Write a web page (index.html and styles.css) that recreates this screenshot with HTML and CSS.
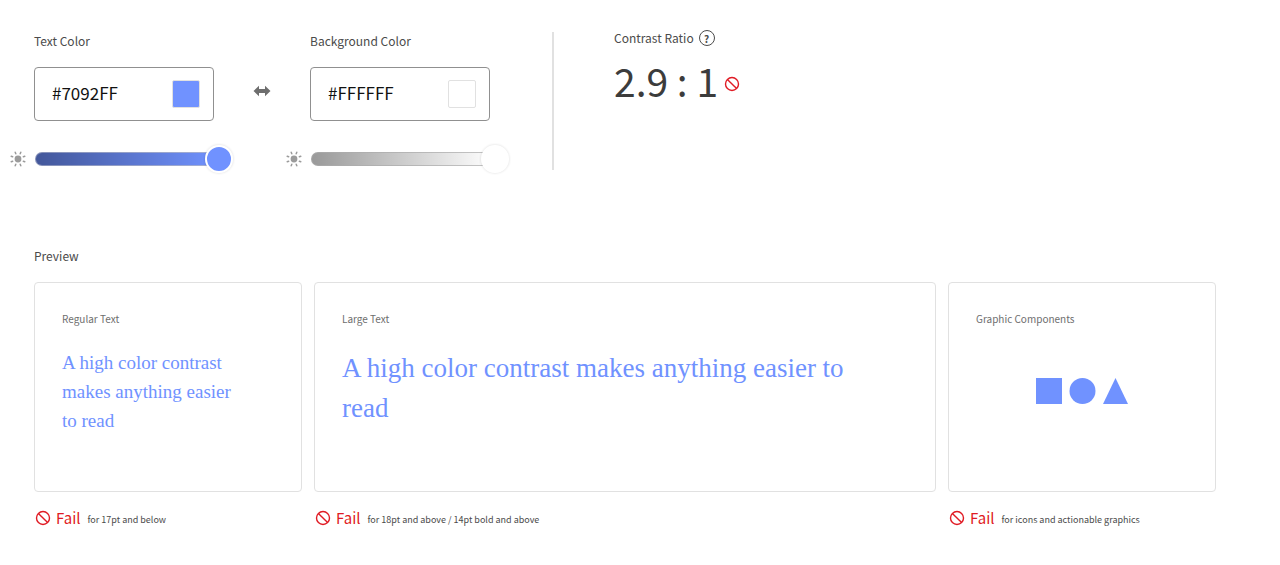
FILE: index.html
```html
<!DOCTYPE html>
<html lang="en">
<head>
<meta charset="utf-8">
<meta name="viewport" content="width=device-width, initial-scale=1">
<title>Contrast Checker</title>
<link rel="stylesheet" href="styles.css">
</head>
<body>
<svg class="sprite" aria-hidden="true">
  <symbol id="sun" viewBox="0 0 16 16">
    <circle cx="8" cy="8" r="3.4" fill="currentColor"/>
    <path d="M13.300 10.200l1.500.6M10.200 13.300l.6 1.500M5.800 13.300l-.6 1.500M2.700 10.200l-1.500.6M2.700 5.800l-1.500-.6M5.800 2.700l-.6-1.500M10.200 2.700l.6-1.500M13.300 5.800l1.500-.6" stroke="currentColor" stroke-width="1.500" stroke-linecap="round"/>
  </symbol>
  <symbol id="fail" viewBox="0 0 16 16">
    <circle cx="8" cy="8" r="6.500" fill="none" stroke="currentColor" stroke-width="1.400"/>
    <path d="M3.400 3.400l9.200 9.200" stroke="currentColor" stroke-width="1.400"/>
  </symbol>
</svg>
<main class="page">
  <section class="checker">
    <div class="control">
      <label class="label control-label" for="text-color">Text Color</label>
      <div class="field">
        <input class="hex" id="text-color" type="text" value="#7092FF">
        <button class="swatch swatch-text" type="button" aria-label="Pick text color"></button>
      </div>
      <div class="brightness">
        <svg class="sun"><use href="#sun"/></svg>
        <input class="slider slider-text" type="range" min="0" max="100" value="100" aria-label="Text color brightness">
      </div>
    </div>
    <button class="swap" type="button" aria-label="Swap colors">
      <svg class="swap-icon" viewBox="0 0 18 12"><path d="M.5 6L6 .8V4h6V.8L17.500 6 12 11.200V8H6v3.200z" fill="currentColor"/></svg>
    </button>
    <div class="control">
      <label class="label control-label" for="background-color">Background Color</label>
      <div class="field">
        <input class="hex" id="background-color" type="text" value="#FFFFFF">
        <button class="swatch swatch-background" type="button" aria-label="Pick background color"></button>
      </div>
      <div class="brightness">
        <svg class="sun"><use href="#sun"/></svg>
        <input class="slider slider-background" type="range" min="0" max="100" value="100" aria-label="Background color brightness">
      </div>
    </div>
    <div class="result">
      <div class="result-head">
        <h2 class="label">Contrast Ratio</h2>
        <button class="help" type="button" aria-label="About contrast ratio">?</button>
      </div>
      <div class="ratio">
        <span>2.9 : 1</span>
        <svg class="fail-icon"><use href="#fail"/></svg>
      </div>
    </div>
  </section>

  <section class="preview">
    <h2 class="label">Preview</h2>
    <div class="cards">
      <article class="sample">
        <div class="card">
          <h3 class="card-title">Regular Text</h3>
          <p class="regular">A high color contrast makes anything easier to read</p>
        </div>
        <div class="status">
          <svg class="fail-icon"><use href="#fail"/></svg>
          <strong class="verdict">Fail</strong>
          <span class="scope">for 17pt and below</span>
        </div>
      </article>
      <article class="sample">
        <div class="card">
          <h3 class="card-title">Large Text</h3>
          <p class="large">A high color contrast makes anything easier to read</p>
        </div>
        <div class="status">
          <svg class="fail-icon"><use href="#fail"/></svg>
          <strong class="verdict">Fail</strong>
          <span class="scope">for 18pt and above / 14pt bold and above</span>
        </div>
      </article>
      <article class="sample">
        <div class="card">
          <h3 class="card-title">Graphic Components</h3>
          <svg class="shapes" viewBox="0 0 92 26">
            <path d="M0 0h26v26H0z"/><circle cx="46.500" cy="13" r="13"/><path d="M79.500 0L92 26H67z"/>
          </svg>
        </div>
        <div class="status">
          <svg class="fail-icon"><use href="#fail"/></svg>
          <strong class="verdict">Fail</strong>
          <span class="scope">for icons and actionable graphics</span>
        </div>
      </article>
    </div>
  </section>
</main>
</body>
</html>
```

FILE: styles.css
```css
* { box-sizing: border-box; }

body {
  margin: 0;
  background: #fff;
  color: #4b4b4b;
  font-family: "Noto Sans CJK SC", "Noto Sans", sans-serif;
}

h2, h3, p { margin: 0; font-weight: 400; }
button { padding: 0; border: 0; background: none; font: inherit; cursor: pointer; }
.sprite { display: none; }

.page { padding: 32px 64px 32px 10px; }
.label { font-size: 12px; line-height: 18px; }

.checker { display: flex; }
.control { width: 224px; }
.control-label { display: block; padding-left: 24px; }

.field {
  display: flex;
  align-items: center;
  justify-content: space-between;
  width: 180px;
  height: 54px;
  margin: 17px 0 24px 24px;
  padding: 0 13px 0 17px;
  border: 1px solid #909090;
  border-radius: 4px;
}
.hex {
  width: 100px;
  height: 28px;
  padding: 0 0 4px;
  border: 0;
  outline: 0;
  background: none;
  color: #111;
  font: 17px/24px "Noto Sans CJK SC", "Noto Sans", sans-serif;
}
.swatch { width: 28px; height: 28px; border: 1px solid #e1e1e1; border-radius: 2px; }
.swatch-text { background: #7092ff; }
.swatch-background { background: #fff; }

.brightness { display: flex; align-items: center; gap: 9px; height: 28px; }
.sun { flex: none; width: 16px; height: 16px; color: #9b9b9b; }
.slider {
  flex: 1;
  min-width: 0;
  height: 28px;
  margin: 0;
  background: none;
  -webkit-appearance: none;
  appearance: none;
}
.slider::-webkit-slider-runnable-track {
  height: 14px;
  border: 1px solid transparent;
  border-radius: 7px;
}
.slider-text::-webkit-slider-runnable-track {
  background:
    linear-gradient(90deg, #43579a, #7092ff 92%, transparent 92%) padding-box,
    linear-gradient(90deg, #8590b8, #a5b0d6 92%, transparent 92%) border-box;
}
.slider-background::-webkit-slider-runnable-track {
  background:
    linear-gradient(90deg, #999, #fff 92%, transparent 92%) padding-box,
    linear-gradient(90deg, #a6a6a6, #c4c4c4 92%, transparent 92%) border-box;
}
.slider::-webkit-slider-thumb {
  width: 28px;
  height: 28px;
  margin-top: -8px;
  border: 2px solid #fff;
  border-radius: 50%;
  box-shadow: 0 0 2px 1px rgba(0, 0, 0, .07);
  -webkit-appearance: none;
  appearance: none;
}
.slider-text::-webkit-slider-thumb { background: #7092ff; }
.slider-background::-webkit-slider-thumb { background: #fff; }

.swap { align-self: stretch; width: 52px; margin-bottom: 24px; padding-left: 4px; color: #6e6e6e; }
.swap-icon { display: block; width: 18px; height: 12px; margin: 0 auto; }

.result { margin: 0 0 3px 42px; padding-left: 60px; border-left: 2px solid #e1e1e1; }
.result-head { display: flex; align-items: center; gap: 5px; height: 12px; }
.help {
  width: 16px;
  height: 16px;
  border: 1px solid #4b4b4b;
  border-radius: 50%;
  color: #4b4b4b;
  font-size: 10px;
  font-weight: 700;
  line-height: 13px;
}
.ratio {
  display: flex;
  align-items: center;
  gap: 6px;
  margin-top: 8px;
  color: #3c3c3c;
  font-size: 39px;
  line-height: 56px;
}
.ratio .fail-icon { margin-top: 8px; }
.fail-icon { flex: none; width: 16px; height: 16px; color: #e01b24; }

.preview { margin-top: 74px; padding-left: 24px; }
.cards { display: grid; grid-template-columns: 268fr 622fr 268fr; gap: 12px; margin-top: 17px; }
.card { min-height: 210px; padding: 28px 27px; border: 1px solid #e1e1e1; border-radius: 4px; }
.card-title { color: #6e6e6e; font-size: 10px; line-height: 16px; }
.regular, .large { color: #7092ff; font-family: "Liberation Serif", serif; }
.regular { max-width: 180px; margin-top: 21px; font-size: 19px; line-height: 29px; }
.large { max-width: 540px; margin-top: 21px; font-size: 27px; line-height: 40px; }
.shapes { display: block; width: 92px; height: 26px; margin: 51px auto 0; fill: #7092ff; }

.status { display: flex; align-items: center; height: 24px; margin-top: 14px; padding-left: 1px; color: #e01b24; }
.verdict { margin-left: 5px; font-size: 15px; font-weight: 400; line-height: 24px; }
.scope { margin-left: 7px; padding-top: 3px; color: #4b4b4b; font-size: 9px; line-height: 16px; }
```
